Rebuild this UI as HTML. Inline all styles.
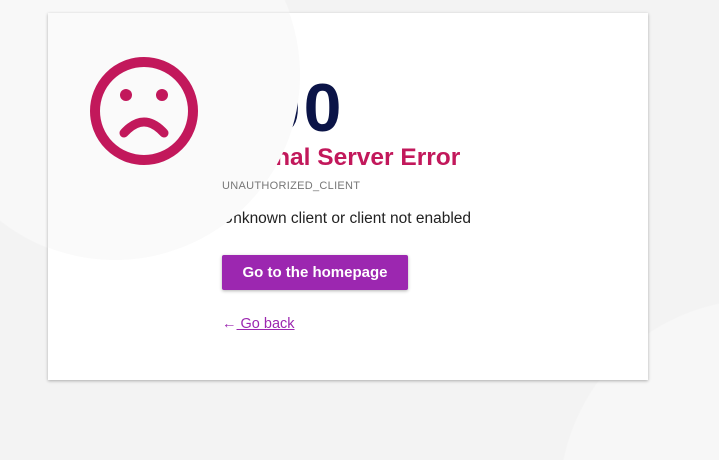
<!DOCTYPE html>
<html><head><style>
html,body{margin:0;padding:0;width:719px;height:460px;overflow:hidden;background:#f3f3f3;font-family:"Liberation Sans",sans-serif;}
.wrap{position:absolute;left:0;top:0;width:719px;height:460px;overflow:hidden;background:radial-gradient(circle at 760px 500px,#f7f7f7 0,#f7f7f7 200px,transparent 201px),radial-gradient(circle at 115px 75px,#f8f8f8 0,#f8f8f8 185px,transparent 186px);}
.card{position:absolute;left:48px;top:13px;width:600px;height:367px;background:#fff;box-shadow:0 1px 3px rgba(0,0,0,.3);overflow:hidden;}
.circ{position:absolute;left:-118px;top:-123px;width:370px;height:370px;border-radius:50%;background:#fafafa;z-index:2;}
.t{position:absolute;left:174px;z-index:1;white-space:nowrap;}
.face{position:absolute;left:40px;top:42px;z-index:3;}
</style></head><body>
<div class="wrap">
<div class="card">
<div class="t" style="top:56px;font-size:68px;font-weight:bold;color:#0b1447;letter-spacing:3px;">500</div>
<div class="t" style="top:131px;font-size:24.5px;font-weight:bold;color:#c2185b;">Internal Server Error</div>
<div class="t" style="top:167px;font-size:11px;color:#777;letter-spacing:.3px;z-index:3;">UNAUTHORIZED_CLIENT</div>
<div class="t" style="top:197px;font-size:15.5px;color:#222;">Unknown client or client not enabled</div>
<div class="circ"></div>
<div class="face"><svg width="112" height="112" viewBox="0 0 112 112"><circle cx="56" cy="56" r="49" fill="none" stroke="#c2185b" stroke-width="10"/><circle cx="38" cy="40" r="6" fill="#c2185b"/><circle cx="74" cy="40" r="6" fill="#c2185b"/><path d="M36 78 Q56 56 76 78" fill="none" stroke="#c2185b" stroke-width="9" stroke-linecap="round"/></svg></div>
<div class="t" style="top:242px;width:186px;height:35px;background:#9c27b0;color:#fff;font-size:15px;font-weight:bold;line-height:35px;text-align:center;border-radius:2px;box-shadow:0 1px 3px rgba(0,0,0,.3);z-index:3;">Go to the homepage</div>
<div class="t" style="top:303px;font-size:14.5px;color:#9c27b0;z-index:3;"><span style="font-weight:bold;">&#8592;</span><span style="text-decoration:underline;"> Go back</span></div>
</div>
</div>
</body></html>
